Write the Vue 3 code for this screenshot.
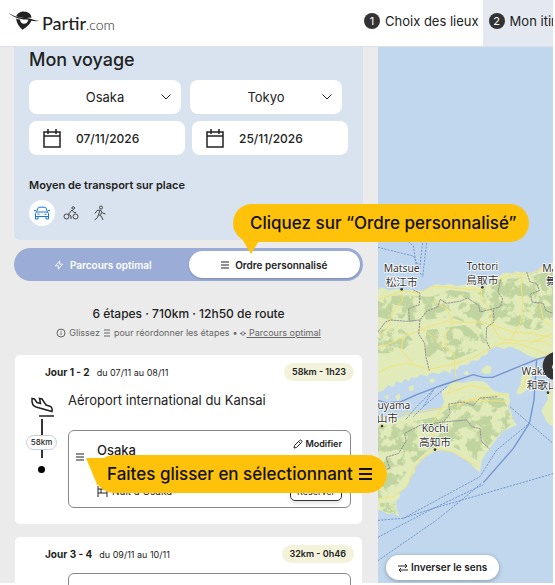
<template>
  <div class="app">
    <header class="topbar">
      <a class="logo" href="#" aria-label="Partir.com">
        <svg class="logo-mark" viewBox="0 0 96 58" aria-hidden="true">
          <path d="M24 16C30 4 42 1 50 2c12 0 20 8 21 18C56 23 40 21 24 16z" fill="#222" />
          <path d="M24 23c4 2 8 3 12 3 0 8 5 13 12 13s12-5 12-11l11-2c-1 12-14 22-27 31C33 49 25 37 24 23z" fill="#222" />
          <path d="M0 5c22 14 40 16 55 16 14 0 26 9 40 9-16 4-30-3-42-4C35 25 14 18 0 5z" fill="#222" />
        </svg>
        <span class="logo-name">Partir</span><span class="logo-ext">.com</span>
      </a>
      <nav class="steps">
        <a
          v-for="(step, i) in steps"
          :key="step"
          href="#"
          class="step"
          :class="{ current: i === 1 }"
        >
          <span class="step-number">{{ i + 1 }}</span>{{ step }}
        </a>
      </nav>
    </header>

    <main class="content">
      <section class="pane">
        <form class="trip" @submit.prevent>
          <h1>Mon voyage</h1>
          <div class="fields cities">
            <label v-for="(city, i) in cities" :key="i" class="field select-field">
              <select v-model="cities[i]" :aria-label="i ? 'Arrivée' : 'Départ'">
                <option>Osaka</option>
                <option>Tokyo</option>
              </select>
              <svg class="chevron" viewBox="0 0 10 6" aria-hidden="true"><path d="M.5.5 5 5 9.500.5" /></svg>
            </label>
          </div>
          <div class="fields">
            <label v-for="(date, i) in dates" :key="i" class="field date-field">
              <svg class="calendar" viewBox="0 0 18 19" aria-hidden="true">
                <path d="M1 3h16v15H1zM1 7h16M5 0v5M13 0v5" />
              </svg>
              <input v-model="dates[i]" type="text" :aria-label="i ? 'Date de retour' : 'Date de départ'" />
            </label>
          </div>
          <fieldset class="transport">
            <legend>Moyen de transport sur place</legend>
            <div class="modes">
              <label v-for="m in modes" :key="m.id" class="mode" :class="{ selected: mode === m.id }">
                <input v-model="mode" type="radio" name="mode" :value="m.id" :aria-label="m.label" />
                <svg viewBox="0 0 16 16" aria-hidden="true"><path :d="m.path" /></svg>
              </label>
            </div>
          </fieldset>
        </form>

        <div class="toggle">
          <button type="button" :class="{ active: order === 'optimal' }" @click="order = 'optimal'">
            <svg class="bolt" viewBox="0 0 12 12" aria-hidden="true"><path d="M7 1 1.500 7H5.500L5 11l5.500-6H6.500z" /></svg>
            Parcours optimal
          </button>
          <button type="button" :class="{ active: order === 'custom' }" @click="order = 'custom'">
            <svg class="bars" viewBox="0 0 8 8" aria-hidden="true"><path d="M0 1h8M0 4h8M0 7h8" /></svg>
            Ordre personnalisé
          </button>
          <div class="callout callout-order">Cliquez sur “Ordre personnalisé”</div>
        </div>

        <p class="summary">6 étapes · 710km · 12h50 de route</p>
        <p class="hint">
          <svg class="info" viewBox="0 0 10 10" aria-hidden="true"><circle cx="5" cy="5" r="4" /><path d="M5 4.500v2.500M5 2.700v1" /></svg>
          <span>Glissez</span>
          <svg class="bars" viewBox="0 0 8 8" aria-hidden="true"><path d="M1 1h6M1 4h6M1 7h6" /></svg>
          <span>pour réordonner les étapes</span>
          <span class="bullet">•</span>
          <a href="#"><svg class="reset" viewBox="0 0 6 6" aria-hidden="true"><path d="M0 3.500h2M4 3.500h2M3 1.500l2 2-2 2-2-2z" /></svg> Parcours optimal</a>
        </p>

        <article class="card">
          <header class="card-head">
            <h2>Jour 1 - 2</h2>
            <span class="dates">du 07/11 au 08/11</span>
            <span class="distance">58km - 1h23</span>
          </header>
          <div class="card-body">
            <div class="timeline">
              <svg class="plane" viewBox="0 0 24 20" aria-hidden="true">
                <path d="M2 1.500 4.500 2 7 5.500l3.500 1L9.500 1.500l2.500.5L16 8l4 1.200c2 .8 2.500 2.500 2 5.300L6 10C3 9 1.500 7 2 1.500z" />
                <path class="runway" d="M9 19h15" />
              </svg>
              <span class="line line-top"></span>
              <span class="leg">58km</span>
              <span class="line"></span>
              <span class="dot"></span>
            </div>
            <div class="stages">
              <p class="place">Aéroport international du Kansai</p>
              <div class="stage">
                <button type="button" class="handle" aria-label="Réordonner">
                  <svg class="bars" viewBox="0 0 8 8" aria-hidden="true"><path d="M0 1h8M0 4h8M0 7h8" /></svg>
                </button>
                <div class="stage-main">
                  <div class="stage-row">
                    <h3>Osaka</h3>
                    <button type="button" class="edit">
                      <svg viewBox="0 0 10 10" aria-hidden="true"><path d="M1 9 1.500 6.500 6.500 1.500a1 1 0 0 1 2 2L3.500 8.500zM5.500 2.500l2 2" /></svg>
                      Modifier
                    </button>
                  </div>
                  <div class="stage-row">
                    <span class="night">
                      <svg viewBox="0 0 11 11" aria-hidden="true"><path d="M1 0v11M1 3h9v8M1 7h9M4 3v4" /></svg>
                      Nuit à Osaka
                    </span>
                    <button type="button" class="book">Réserver</button>
                  </div>
                </div>
                <div class="callout callout-drag">
                  Faites glisser en sélectionnant
                  <svg viewBox="0 0 13 12" aria-hidden="true"><path d="M0 1h13M0 6h13M0 11h13" /></svg>
                </div>
              </div>
            </div>
          </div>
        </article>

        <article class="card">
          <header class="card-head">
            <h2>Jour 3 - 4</h2>
            <span class="dates">du 09/11 au 10/11</span>
            <span class="distance">32km - 0h46</span>
          </header>
          <div class="card-body">
            <div class="timeline"></div>
            <div class="stages next">
              <div class="stage"></div>
            </div>
          </div>
        </article>
      </section>

      <section class="map">
        <svg class="map-canvas" viewBox="24 -579 525 1608" preserveAspectRatio="xMinYMin slice" role="img" aria-label="Carte">
          <defs>
            <clipPath id="land">
              <path v-for="(shape, i) in land" :key="i" :d="shape" />
            </clipPath>
            <filter id="relief" x="0" y="0" width="1" height="1" color-interpolation-filters="sRGB">
              <feTurbulence type="fractalNoise" baseFrequency="0.03" numOctaves="5" seed="8" />
              <feColorMatrix values="0 0 0 0 .75  0 0 0 0 .83  0 0 0 0 .62  9 0 0 0 -3.900" />
              <feComposite in2="SourceGraphic" operator="in" />
            </filter>
          </defs>
          <g class="land"><path v-for="(shape, i) in land" :key="i" :d="shape" /></g>
          <g class="hills" clip-path="url(#land)">
            <g filter="url(#relief)">
              <path v-for="(shape, i) in hills" :key="i" :d="shape" />
            </g>
          </g>
          <g class="roads"><path v-for="(road, i) in roads" :key="i" :d="road" /></g>
          <g class="borders"><path v-for="(border, i) in borders" :key="i" :d="border" /></g>
          <g class="ferries"><path v-for="(ferry, i) in ferries" :key="i" :d="ferry" /></g>
          <path class="route" d="M24 482 50 488 90 486 140 464 210 438 310 404 340 412 368 412 500 358 549 345M500 358 492 480 478 550 430 625 340 728" />
          <g class="places">
            <g v-for="p in places" :key="p.name">
              <circle :cx="p.x" :cy="p.y + 52" r="4" />
              <text :x="p.x" :y="p.y">{{ p.name }}</text>
              <text class="local" :x="p.x" :y="p.y + 41">{{ p.local }}</text>
            </g>
          </g>
          <circle class="pin" cx="561" cy="378" r="43" />
          <path class="pin-mark" d="M550 374q-6 6 0 14" />
        </svg>
        <button type="button" class="reverse">
          <svg viewBox="0 0 10 8" aria-hidden="true"><path d="M0 2h9M7 0l2 2-2 2M10 6H1M3 4 1 6l2 2" /></svg>
          Inverser le sens
        </button>
      </section>
    </main>
  </div>
</template>

<script setup>
import { ref } from 'vue';

const steps = ['Choix des lieux', 'Mon itinéraire'];
const cities = ref(['Osaka', 'Tokyo']);
const dates = ref(['07/11/2026', '25/11/2026']);
const mode = ref('car');
const order = ref('custom');

const modes = [
  {
    id: 'car',
    label: 'Voiture',
    path: 'M2.500 7 4 3q.3-.8 1-.8h6q.7 0 1 .8L13.500 7M1.500 13V8.500Q1.500 7 3 7h10q1.500 0 1.500 1.500V13M1.500 11.500h13M1.500 11.500V14H4v-2.500M12 11.500V14h2.500v-2.500M3.500 9.200h2M10.500 9.200h2M0 5.500h2M14 5.500h2',
  },
  {
    id: 'bike',
    label: 'Vélo',
    path: 'M6 11.500a2.500 2.500 0 1 1-5 0 2.500 2.500 0 0 1 5 0M15 11.500a2.500 2.500 0 1 1-5 0 2.500 2.500 0 0 1 5 0M8 14v-3L5.500 9 9 5l2 2.500h2M11.500 3a1.300 1.300 0 1 1-2.600 0 1.300 1.300 0 0 1 2.600 0',
  },
  {
    id: 'walk',
    label: 'À pied',
    path: 'M10.500 2.500a1.500 1.500 0 1 1-3 0 1.500 1.500 0 0 1 3 0M3 8.500 5 5.500 8.500 5l2 3 3 1M8 5.500 6.500 9.500 9.500 11.500 11 15M6.500 9.500 5.500 12.500 2.500 15M9.500 7.500 8.500 10.500',
  },
];

// Contours des terres
const land = [
  'M24 148 34 142 44 146 60 150 80 146 100 152 130 150 160 152 180 140 200 132 215 136 240 132 262 138 290 133 320 136 342 143 366 122 390 108 400 98 430 100 440 94 458 98 470 95 482 106 492 96 500 100 512 82 530 80 549 66V350L520 352 508 358 490 352 470 345 448 330 420 320 402 327 380 320 358 328 350 346 334 348 326 362 306 362 292 374 270 376 262 388 246 386 240 400 222 392 206 402 186 398 172 408 152 404 138 414 124 412 118 424 104 416 96 430 78 424 70 442 54 436 40 452 24 456z',
  'M502 374 494 396 484 410 480 430 468 452 450 464 438 460 450 436 454 412 470 392 484 384z',
  'M338 384 350 376 364 380 362 398 346 402 334 396z',
  'M549 438 540 452 530 458 534 478 524 494 514 512 522 528 532 548 549 562z',
  'M24 534 60 528 80 536 110 524 150 518 190 512 214 506 222 486 216 466 216 452 234 440 248 426 280 428 310 422 340 424 352 432 368 450 390 458 416 460 420 482 415 500 424 520 432 544 441 555 400 572 370 610 345 645 334 665 330 698 314 684 296 664 270 650 245 635 220 630 195 634 164 652 148 668 134 680 136 696 120 712 116 730 100 750 88 754 90 772 78 784 80 806 88 832 74 820 52 822 36 812 24 810z',
  'M76 468 88 460 92 474 82 484zM116 440 130 436 132 450 120 452zM176 420 190 414 196 424 184 430zM280 396 294 392 296 404 284 404zM40 470 56 464 54 478z',
];

const hills = [
  'M24 170 100 166 180 170 240 150 320 160 380 120 480 110 549 90V250L500 270 440 262 380 240 320 260 240 230 160 240 100 250 24 230z',
  'M24 270 90 262 130 300 90 340 24 340zM170 270 330 250 350 320 250 360 160 350z',
  'M24 560 110 548 200 530 280 470 400 474 432 545 370 600 320 660 250 620 180 625 120 680 80 740 24 780zM30 790 80 786 76 822 30 812z',
];

const roads = [
  'M24 180 60 166 100 152 150 160 190 138 250 144 330 150 380 120 430 102 480 102 520 84 549 80',
  'M24 325 60 310 100 290 140 276 170 262 230 244 256 248 330 246 370 256 430 276 490 280 549 294',
  'M24 400 60 380 110 370 180 388 250 372 310 352 350 330 400 308 450 312 500 330 549 352',
  'M90 152 98 180 66 220 60 250 32 290',
  'M190 180 230 208 250 246 222 290 230 326 252 342 254 380 260 430',
  'M336 146 332 176 362 210 366 256 390 296 440 302 520 304 549 320',
  'M452 108 458 190 452 250 420 300',
  'M100 290 92 330 130 372M150 260 200 300 222 330',
  'M24 536 80 524 150 514 216 504 260 490 340 470 416 462',
  'M216 504 180 560 196 626 150 660 130 690 110 740 70 770 24 776M260 500 300 480 410 484M196 626 250 636 320 680',
  'M250 430 232 460 300 436 360 448M470 394 458 450',
  'M510 190 520 240 549 262M480 310 549 280',
];

const borders = [
  'M24 276 46 246 62 240 110 244 150 240 170 214 204 200 210 178 230 190 270 184 292 174 326 196 330 216 362 208 392 200 398 176 384 156 392 118',
  'M130 150 150 160 148 194 116 206 118 240M150 240 146 282 164 310 168 352 178 392',
  'M370 210 372 246 350 262 348 300 360 326',
  'M470 96 480 126 500 130 508 152 482 162 486 186 520 190 528 212 549 220',
  'M24 690 60 686 48 652 86 640 108 604 104 580 150 556 220 546 240 520 236 492 280 486 310 496 330 474 384 470',
  'M220 546 290 540 306 560 330 566 334 604 358 626',
];

const ferries = [
  'M24 22 130 48 150 88M92 -16 130 18 142 96M160 -10 148 96 158 110M172 -10 158 110',
  'M24 841 100 835 180 808 549 701M24 892 180 810 340 734M24 962 200 840 270 784 334 730',
  'M100 835 330 710 380 630 478 550M420 500 478 550 549 610',
  'M260 420 200 440 140 500 106 540M230 440 160 500 130 530M190 450 160 500',
];

const places = [
  { name: 'Matsue', local: '松江市', x: 95, y: 96 },
  { name: 'Tottori', local: '鳥取市', x: 337, y: 90 },
  { name: 'Maizuru', local: '舞鶴市', x: 576, y: 95 },
  { name: 'Wakayama', local: '和歌山市', x: 534, y: 406 },
  { name: 'Matsuyama', local: '松山市', x: 36, y: 506 },
  { name: 'Kōchi', local: '高知市', x: 195, y: 577 },
];
</script>

<style>
body {
  background: #fff;
}
</style>

<style scoped>
.app {
  box-sizing: border-box;
  height: 100vh;
  padding: 0 2px 2px 0;
  display: flex;
  flex-direction: column;
  overflow: hidden;
  font-family: Inter, "Noto Sans CJK JP", sans-serif;
  font-size: 13px;
  color: #222;
}

h1,
h2,
h3,
p,
fieldset {
  margin: 0;
  padding: 0;
  border: 0;
}

button,
input,
select {
  font: inherit;
  color: inherit;
  border: 0;
  margin: 0;
  padding: 0;
  background: none;
}

button {
  cursor: pointer;
}

svg {
  flex: none;
  fill: none;
  stroke: currentColor;
}

/* En-tête */
.topbar {
  flex: none;
  display: flex;
  height: 46px;
  overflow: hidden;
  background: #fff;
  border-bottom: 1px solid #dde1e6;
}

.logo {
  box-sizing: border-box;
  flex: 0 0 356px;
  display: flex;
  align-items: baseline;
  padding: 11px 0 0 8px;
  color: #222;
  text-decoration: none;
  font-family: Lato, sans-serif;
  line-height: 24px;
}

.logo-mark {
  width: 32px;
  height: 19px;
  margin-right: 2px;
  stroke: none;
}

.logo-name {
  font-size: 18px;
  font-weight: 500;
}

.logo-ext {
  font-size: 14px;
  font-weight: 300;
}

.steps {
  display: flex;
}

.step {
  display: flex;
  align-items: center;
  gap: 5px;
  padding: 0 4px 4px 8px;
  color: #222;
  text-decoration: none;
  white-space: nowrap;
}

.step.current {
  background: #e4e8f0;
  padding-left: 6px;
}

.step-number {
  width: 16px;
  border-radius: 50%;
  background: #333;
  color: #fff;
  font-size: 11px;
  line-height: 16px;
  text-align: center;
}

.content {
  flex: 1;
  min-height: 0;
  display: flex;
}

.pane {
  box-sizing: border-box;
  flex: 0 0 378px;
  padding: 0 15px 0 14px;
  background: #ebebeb;
  position: relative;
  z-index: 1;
}

/* Formulaire du voyage */
.trip {
  padding: 0 15px 14px;
  background: #d8e3ef;
  border-radius: 0 0 5px 5px;
}

h1 {
  font-size: 18px;
  font-weight: 500;
  line-height: 26px;
}

.fields {
  display: flex;
  gap: 7px;
  margin-top: 7px;
}

.cities {
  gap: 9px;
  padding-right: 6px;
}

.field {
  flex: 1;
  min-width: 0;
  height: 34px;
  border-radius: 8px;
  background: #fff;
}

.select-field {
  display: grid;
  align-items: center;
}

.select-field > * {
  grid-area: 1 / 1;
}

.select-field select {
  appearance: none;
  width: 100%;
  height: 100%;
  text-align: center;
  text-align-last: center;
}

.chevron {
  width: 10px;
  height: 6px;
  justify-self: end;
  margin-right: 10px;
  pointer-events: none;
}

.date-field {
  box-sizing: border-box;
  display: flex;
  align-items: center;
  gap: 15px;
  padding-left: 14px;
}

.calendar {
  width: 18px;
  height: 19px;
  stroke-width: 1.5;
}

.date-field input {
  width: 80px;
  font-size: 12px;
  font-weight: 500;
}

.transport {
  margin-top: 22px;
}

.transport legend {
  padding: 0;
  font-size: 11px;
  font-weight: 600;
  line-height: 16px;
}

.modes {
  display: flex;
  gap: 3px;
  margin-top: 7px;
}

.mode {
  width: 26px;
  height: 26px;
  border-radius: 50%;
  display: grid;
  place-items: center;
  color: #444;
  cursor: pointer;
}

.mode.selected {
  background: #fff;
  color: #1677e0;
}

.mode > * {
  grid-area: 1 / 1;
}

.mode input {
  opacity: 0;
  width: 16px;
}

.mode svg {
  width: 16px;
  height: 16px;
}

/* Choix de l'ordre */
.toggle {
  position: relative;
  box-sizing: border-box;
  display: flex;
  height: 33px;
  margin-top: 8px;
  padding: 3px;
  border-radius: 17px;
  background: #9badd6;
}

.toggle button {
  flex: 1;
  display: flex;
  align-items: center;
  justify-content: center;
  gap: 6px;
  border-radius: 14px;
  color: #fff;
  font-size: 10px;
  font-weight: 600;
}

.toggle .active {
  background: #fff;
  color: #222;
  box-shadow: 0 1px 2px rgba(0, 0, 0, 0.2);
}

.bars {
  width: 8px;
  height: 8px;
}

.bolt {
  width: 10px;
  height: 12px;
}

.summary {
  margin-top: 23px;
  font-size: 12px;
  font-weight: 500;
  line-height: 20px;
  text-align: center;
}

.hint {
  display: flex;
  align-items: center;
  justify-content: center;
  gap: 3px;
  margin: 2px 0 15px;
  font-size: 9px;
  line-height: 14px;
  color: #666;
}

.hint a {
  color: inherit;
}

.info {
  width: 10px;
  height: 10px;
}

.reset {
  width: 6px;
  height: 6px;
}

/* Étapes */
.card {
  margin: 0 1px 13px 1px;
  padding: 8px 0 16px;
  border-radius: 5px;
  background: #fff;
}

.card-head {
  display: flex;
  align-items: center;
  gap: 7px;
  padding: 0 8px 0 30px;
}

h2 {
  font-size: 10px;
  font-weight: 700;
}

.dates {
  font-size: 9px;
}

.distance {
  margin-left: auto;
  padding: 0 8px;
  border-radius: 9px;
  background: #f3f3dc;
  font-size: 9px;
  font-weight: 600;
  line-height: 18px;
}

.card-body {
  display: flex;
  padding-right: 11px;
}

.timeline {
  flex: 0 0 53px;
  display: flex;
  flex-direction: column;
  align-items: center;
  padding-top: 16px;
}

.plane {
  width: 24px;
  height: 20px;
  margin-bottom: 2px;
  stroke-width: 1.5;
}

.line {
  width: 2px;
  height: 8px;
  background: #333;
}

.line-top {
  height: 16px;
}

.leg {
  padding: 0 4px;
  border: 1px solid #c8cbe4;
  border-radius: 8px;
  font-size: 8px;
  font-weight: 500;
  line-height: 13px;
}

.dot {
  width: 7px;
  height: 7px;
  margin-top: 8px;
  border-radius: 50%;
  background: #000;
}

.stages {
  flex: 1;
  min-width: 0;
  padding-top: 9px;
}

.next {
  padding-top: 10px;
}

.place {
  margin-bottom: 20px;
  line-height: 20px;
}

.stage {
  position: relative;
  box-sizing: border-box;
  min-height: 78px;
  display: flex;
  padding: 5px 8px 6px 7px;
  border: 1px solid #888;
  border-radius: 6px;
}

.handle {
  align-self: flex-start;
  display: flex;
  margin: 17px 13px 0 0;
}

.stage-main {
  flex: 1;
  display: flex;
  flex-direction: column;
  justify-content: space-between;
}

.stage-row {
  display: flex;
  justify-content: space-between;
  align-items: flex-start;
}

h3 {
  font-size: 13px;
  font-weight: 500;
  line-height: 28px;
}

.edit {
  display: flex;
  align-items: center;
  gap: 2px;
  font-size: 9px;
  font-weight: 600;
  line-height: 16px;
}

.edit svg {
  width: 10px;
  height: 10px;
}

.night {
  display: flex;
  align-items: center;
  gap: 4px;
  font-size: 10px;
  line-height: 18px;
}

.night svg {
  width: 11px;
  height: 11px;
}

.book {
  padding: 0 6px;
  border: 1px solid #333;
  border-radius: 5px;
  font-size: 9px;
  line-height: 17px;
  box-shadow: 0 2px 4px rgba(0, 0, 0, 0.12);
}

/* Bulles d'aide */
.callout {
  position: absolute;
  z-index: 2;
  display: flex;
  align-items: center;
  height: 38px;
  border-radius: 19px;
  background: #ffc20a;
  color: #111;
  font-size: 17px;
  font-weight: 500;
  white-space: nowrap;
}

.callout::before {
  content: "";
  position: absolute;
  background: #ffc20a;
}

.callout-order {
  left: 219px;
  bottom: 39px;
  padding: 0 12px 0 17px;
}

.callout-order::before {
  left: 6px;
  top: 30px;
  width: 24px;
  height: 20px;
  clip-path: polygon(0 0, 100% 0, 50% 100%);
}

.callout-drag {
  left: 26px;
  top: 24px;
  gap: 6px;
  padding: 0 15px 0 12px;
}

.callout-drag::before {
  left: -9px;
  top: 3px;
  width: 28px;
  height: 30px;
  clip-path: polygon(0 0, 100% 0, 100% 100%, 40% 90%);
  z-index: -1;
}

.callout-drag svg {
  width: 13px;
  height: 12px;
  stroke-width: 2;
}

/* Carte */
.map {
  flex: 1;
  min-width: 0;
  position: relative;
  overflow: hidden;
  background: #c0d7ed;
}

.map-canvas {
  display: block;
  width: 100%;
  height: 100%;
  stroke: none;
}

.land {
  fill: #e0ebb9;
}

.hills {
  fill: #bfd39e;
}

.roads {
  fill: none;
  stroke: #f3e277;
  stroke-width: 3;
  stroke-linejoin: round;
}

.borders {
  fill: none;
  stroke: #918f98;
  stroke-width: 3;
  stroke-dasharray: 7 2;
}

.ferries {
  fill: none;
  stroke: #6f92d0;
  stroke-width: 3;
  stroke-dasharray: 6 4;
}

.route {
  fill: none;
  stroke: #7593cd;
  stroke-width: 4;
}

.places {
  fill: #333;
}

.places text {
  font-family: "Noto Sans", "Noto Sans CJK JP", sans-serif;
  font-size: 31px;
  text-anchor: middle;
  paint-order: stroke;
  stroke: #fff;
  stroke-width: 5px;
  stroke-linejoin: round;
}

.places .local {
  font-size: 32px;
}

.pin {
  fill: #333;
}

.pin-mark {
  fill: none;
  stroke: #ddd;
  stroke-width: 3;
}

.reverse {
  position: absolute;
  left: 8px;
  bottom: 3px;
  display: flex;
  align-items: center;
  gap: 3px;
  padding: 0 12px;
  border-radius: 13px;
  background: #fff;
  font-size: 10px;
  font-weight: 600;
  line-height: 25px;
  white-space: nowrap;
  box-shadow: 0 1px 4px rgba(0, 0, 0, 0.3);
}

.reverse svg {
  width: 10px;
  height: 8px;
}
</style>
